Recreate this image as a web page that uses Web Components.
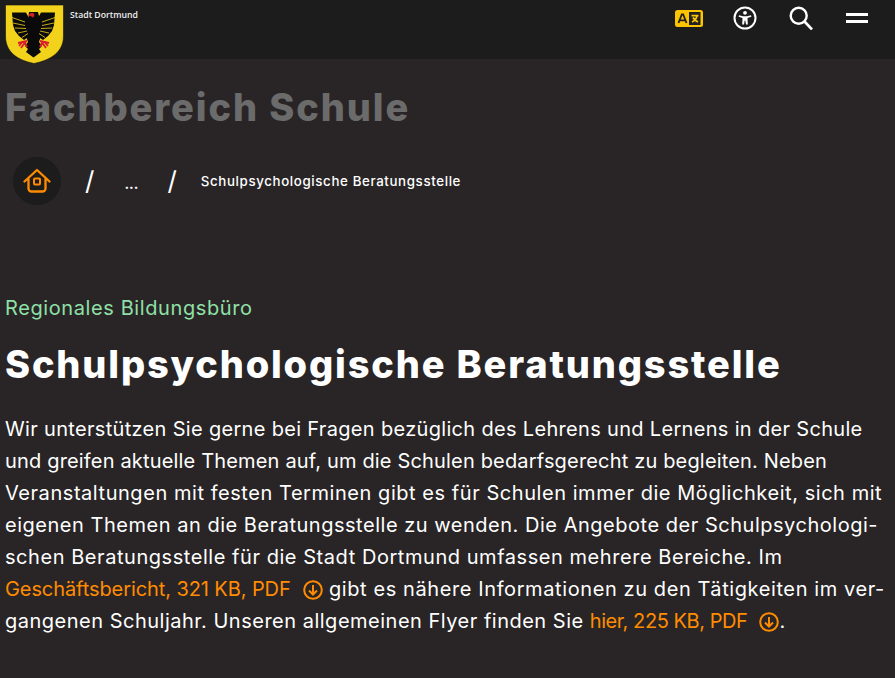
<!DOCTYPE html>
<html lang="de"><head><meta charset="utf-8"><title>Schulpsychologische Beratungsstelle</title>
<style>
html,body{margin:0;padding:0;background:#292526;height:100%;overflow:hidden}
body{font-family:Inter,"Noto Sans",sans-serif;color:#fff}
</style></head><body>
<template id="t-header"><style>
:host{display:flex;height:59px;background:#1c1c1c;padding-left:5px;box-sizing:border-box;align-items:flex-start}
.logo{width:59px;height:64px;flex:none;position:relative;z-index:1}
.name{font:600 8.7px "Open Sans",sans-serif;color:#eee;margin:9px 0 0 6px;white-space:nowrap}
.icons{margin-left:auto;display:flex;align-items:center;height:36px;padding-right:27px}
svg{display:block}
</style>
<svg class="logo" viewBox="0 0 59 64">
<path d="M.5 5H58.500V36C58.500 52 46 60 29 63.500 12 60 .5 52 .5 36Z" fill="#f2d21b" stroke="#111" stroke-width=".6"/>
<g fill="#0a0a0a">
<path d="M7 12.500 21 12.500 24 18 25 22 25 36 19 40 14 36 10 31 8 25Z"/>
<path d="M50 12.500 36 12.500 33 18 32 22 32 36 38 40 43 36 47 31 49 25Z"/>
<path d="M22 20 35 20 36 36 34 42 37 46 34 49 36 52 28.500 57.500 21 52 23 49 20 46 23 42 21 36Z"/>
<path d="M24 12H33L35 20 23 22Z"/>
</g>
<path d="M7 17.500 20 22M8 23 20 25.500M10 28 21 28.500M13 33 22 31M17 37.500 23 33.500M50 17.500 37 22M49 23 37 25.500M47 28 36 28.500M44 33 35 31M40 37.500 34 33.500" stroke="#f2d21b" stroke-width=".8" fill="none"/>
<path d="M23.500 15.500 25 13.500Q28 11.500 29.500 14.500L28.500 17.500 26.500 16.500Z" fill="#d8202c"/>
<path d="M13 43 22 41M21 41 16 48M17.500 42 14 46M44 43 35 41M36 41 41 48M39.500 42 43 46M20 43 22 47M37 43 35 47" stroke="#d8202c" stroke-width="1.800" fill="none"/>
</svg>
<div class="name">Stadt Dortmund</div>
<div class="icons">
<svg width="28" height="17" viewBox="0 0 28 17" style="margin-right:1px"><rect width="28" height="17" rx="2.500" fill="#fdc400"/><path d="M3.500 13 6.800 4.500h1.400L11.500 13M5 10.300h5" stroke="#222" stroke-width="1.800" fill="none"/><rect x="14" y="2" width="11.500" height="13" fill="#222"/><path d="M16.500 5.700h7M22 5.700c-.5 3-2.500 5.300-5 6.300M18 7.500c1 2 2.500 3.500 5 4.500" stroke="#fdc400" stroke-width="1.800" fill="none"/></svg>
<svg width="24" height="24" viewBox="0 0 24 24" style="margin-left:29px"><circle cx="12" cy="12" r="10.500" fill="none" stroke="#fff" stroke-width="2"/><circle cx="12" cy="6.800" r="1.900" fill="#fff"/><path d="M6 9.300 10 10.300H14L18 9.300 18.400 10.800 14.500 12 14.800 18.500 13 18.500 12.300 14.500H11.700L11 18.500 9.200 18.500 9.500 12 5.600 10.800Z" fill="#fff"/></svg>
<svg width="24" height="24" viewBox="0 0 24 24" style="margin-left:32px"><circle cx="9.700" cy="9.700" r="8" fill="none" stroke="#fff" stroke-width="2.400"/><path d="M15.500 15.500 23 23.500" stroke="#fff" stroke-width="2.600" fill="none"/></svg>
<svg width="22" height="10" viewBox="0 0 22 10" style="margin-left:33px"><path d="M0 1.500H22M0 8.500H22" stroke="#fff" stroke-width="3" fill="none"/></svg>
</div></template>

<template id="t-crumbs"><style>
:host{display:flex;align-items:center;height:48px;margin:0 0 0 8px;font-size:13.3px;font-weight:500;color:#fff}
.home{width:48px;height:48px;border-radius:50%;background:#1c1c1c;display:flex;align-items:center;justify-content:center;flex:none}
.sep{font-size:26px;font-weight:400;line-height:1}
.dots{font-size:14px;margin-top:4px;font-weight:700}
span{white-space:nowrap}
.last{letter-spacing:.63px}
</style>
<div class="home"><svg width="28" height="26" viewBox="0 0 28 26"><path d="M1.500 13.500 14 2 26.500 13.500M5.500 11V20.500A3 3 0 0 0 8.500 23.500H19.500A3 3 0 0 0 22.500 20.500V11" fill="none" stroke="#ff8c00" stroke-width="2.300" stroke-linecap="round" stroke-linejoin="round"/><rect x="11" y="10.500" width="6" height="6" rx="1" fill="none" stroke="#ff8c00" stroke-width="2"/></svg></div>
<span class="sep" style="margin-left:24px">/</span><span class="dots" style="margin-left:30px">...</span><span class="sep" style="margin-left:29px">/</span><span class="last" style="margin-left:24px"><slot></slot></span>
</template>

<template id="t-dl"><style>
:host{display:inline;color:#ff8c00}
svg{vertical-align:-4px;margin:0 0 0 12px}
</style><slot></slot><svg width="20" height="20" viewBox="0 0 20 20"><circle cx="10" cy="10" r="8.800" fill="none" stroke="#ff8c00" stroke-width="2"/><path d="M10 5V14M6 10.500 10 14.500 14 10.500" fill="none" stroke="#ff8c00" stroke-width="2"/></svg></template>

<template id="t-line"><style>:host{display:block;height:32px;white-space:nowrap;letter-spacing:var(--ls,.32px)}</style><slot></slot></template>

<template id="t-main"><style>
:host{display:block;padding:0 5px;white-space:nowrap}
.top{font-size:38px;font-weight:800;color:#6b6b6b;margin:0;line-height:44px;padding-top:26px;letter-spacing:1.9px}
.kicker{font-size:20px;color:#8fe0a6;line-height:28px;margin:89px 0 0;letter-spacing:.6px}
h1{font-size:38px;font-weight:800;line-height:48px;margin:18px 0 0;letter-spacing:1.83px}
.body{font-size:20px;line-height:32px;margin:25px 0 0}
</style>
<div class="top"><slot name="top"></slot></div>
<slot name="crumbs"></slot>
<div class="kicker"><slot name="kicker"></slot></div>
<h1><slot name="title"></slot></h1>
<div class="body"><slot></slot></div></template>

<site-header></site-header>
<page-main>
<span slot="top">Fachbereich Schule</span>
<bread-crumbs slot="crumbs" style="margin-top:28px">Schulpsychologische Beratungsstelle</bread-crumbs>
<span slot="kicker">Regionales Bildungsbüro</span>
<span slot="title">Schulpsychologische Beratungsstelle</span>
<text-line>Wir unterstützen Sie gerne bei Fragen bezüglich des Lehrens und Lernens in der Schule</text-line>
<text-line style="--ls:.17px">und greifen aktuelle Themen auf, um die Schulen bedarfsgerecht zu begleiten. Neben</text-line>
<text-line style="--ls:.55px">Veranstaltungen mit festen Terminen gibt es für Schulen immer die Möglichkeit, sich mit</text-line>
<text-line style="--ls:.52px">eigenen Themen an die Beratungsstelle zu wenden. Die Angebote der Schulpsychologi-</text-line>
<text-line style="--ls:.55px">schen Beratungsstelle für die Stadt Dortmund umfassen mehrere Bereiche. Im</text-line>
<text-line style="--ls:.6px"><dl-link style="letter-spacing:-.09px">Geschäftsbericht, 321 KB, PDF</dl-link> gibt es nähere Informationen zu den Tätigkeiten im ver-</text-line>
<text-line style="--ls:.5px">gangenen Schuljahr. Unseren allgemeinen Flyer finden Sie <dl-link style="letter-spacing:-.44px">hier, 225 KB, PDF</dl-link>.</text-line>
</page-main>
<script>
for (const [tag,id] of [['site-header','t-header'],['bread-crumbs','t-crumbs'],['dl-link','t-dl'],['text-line','t-line'],['page-main','t-main']]) {
  customElements.define(tag, class extends HTMLElement {
    constructor(){super();this.attachShadow({mode:'open'}).append(document.getElementById(id).content.cloneNode(true));}
  });
}
</script>
</body></html>
